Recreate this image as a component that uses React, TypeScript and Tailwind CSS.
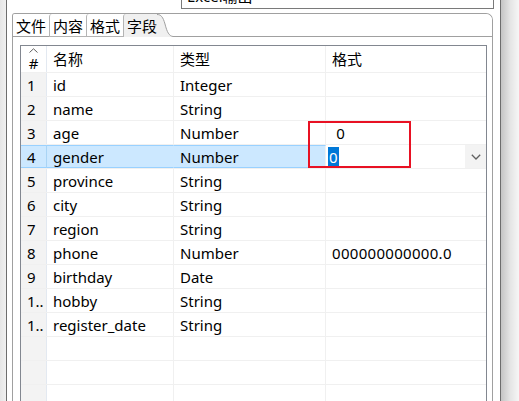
import React from "react";

const rows: [string, string, string, string][] = [
  ["1", "id", "Integer", ""],
  ["2", "name", "String", ""],
  ["3", "age", "Number", " 0"],
  ["4", "gender", "Number", "0"],
  ["5", "province", "String", ""],
  ["6", "city", "String", ""],
  ["7", "region", "String", ""],
  ["8", "phone", "Number", "000000000000.0"],
  ["9", "birthday", "Date", ""],
  ["1..", "hobby", "String", ""],
  ["1..", "register_date", "String", ""],
  ["", "", "", ""],
  ["", "", "", ""],
  ["", "", "", ""],
];

const font = { fontFamily: '"Noto Sans", "Noto Sans CJK SC", sans-serif' };

function Tab({ label, first }: { label: string; first?: boolean }) {
  return (
    <div
      className={`h-full flex items-center pt-[2px] pl-[3px] pr-[3px] bg-white border-b border-[#a0a0a0] ${
        first ? "" : "border-l border-[#b4b4b4] rounded-tl-[3px]"
      }`}
    >
      <span className="text-[15px] leading-none text-black">{label}</span>
    </div>
  );
}

function FieldsTable() {
  return (
    <div className="w-[467px] border border-[#828790] bg-white overflow-hidden flex-1">
      {/* header */}
      <div className="flex h-[27px] border-b border-[#f0f0f0] text-[15px] text-black">
        <div className="w-[26px] flex flex-col items-center border-r border-[#e3e9f1] bg-white">
          <svg width="9" height="5" viewBox="0 0 9 5" className="mt-[2px]">
            <path d="M0.5 4.5 L4.5 0.8 L8.5 4.5" fill="none" stroke="#606060" strokeWidth="1" />
          </svg>
          <span className="leading-none mt-[3px]">#</span>
        </div>
        <div className="w-[127px] pl-[6px] flex items-center border-r border-[#f0f0f0]">名称</div>
        <div className="w-[152px] pl-[6px] flex items-center border-r border-[#f0f0f0]">类型</div>
        <div className="flex-1 pl-[6px] flex items-center">格式</div>
      </div>
      {rows.map((r, i) => {
        const sel = r[0] === "4";
        return (
          <div key={i} className="flex h-[24px] border-b border-[#f0f0f0] text-[15px] text-black">
            <div
              className={`w-[26px] flex items-center pt-[2px] pl-[6px] border-r ${
                sel ? "bg-[#cce8ff] border-[#a9d4f5] border-y border-y-[#99d1ff]" : "bg-[#f3f3f3] border-[#e3e9f1]"
              }`}
            >
              {r[0]}
            </div>
            <div
              className={`w-[127px] pl-[6px] pt-[2px] flex items-center border-r ${
                sel ? "bg-[#cce8ff] border-[#cce8ff] border-y border-y-[#99d1ff]" : "border-[#f0f0f0]"
              }`}
            >
              {r[1]}
            </div>
            <div
              className={`w-[152px] pl-[6px] pt-[2px] flex items-center border-r ${
                sel ? "bg-[#cce8ff] border-[#f0f0f0] border-y border-y-[#99d1ff]" : "border-[#f0f0f0]"
              }`}
            >
              {r[2]}
            </div>
            {sel ? (
              <div className="flex-1 flex items-stretch bg-white">
                <div className="flex-1 flex items-center pt-[1px] pl-[2px]">
                  <span className="bg-[#0078d7] text-white leading-[20px] px-[1px]">0</span>
                </div>
                <div className="w-[21px] bg-[#f3f3f3] flex items-center justify-center">
                  <svg width="10" height="6" viewBox="0 0 10 6">
                    <path d="M0.8 0.8 L5 5 L9.2 0.8" fill="none" stroke="#606060" strokeWidth="1.3" />
                  </svg>
                </div>
              </div>
            ) : (
              <div className="flex-1 pl-[6px] pt-[2px] flex items-center whitespace-pre tracking-[0.3px]">{r[3]}</div>
            )}
          </div>
        );
      })}
    </div>
  );
}

export default function App() {
  return (
    <div className="relative w-[519px] h-[401px] flex overflow-hidden bg-white" style={font}>
      <div className="w-[6px] h-full bg-gradient-to-r from-[#e6e6e6] to-[#f0f0f0]" />
      <div className="w-[495px] h-full flex flex-col border-x border-[#6d6d6d] bg-white">
        {/* cropped text field at top */}
        <div className="h-[13px] flex">
          <div className="ml-[174px] w-[313px] h-[9px] border-x border-b border-[#7a7a7a] overflow-hidden relative">
            <span className="absolute left-[5px] top-[-13px] text-[15px] leading-[18px] text-black">Excel输出</span>
          </div>
        </div>
        {/* tab folder */}
        <div className="ml-[5px] w-[481px] flex-1 flex flex-col border-x border-t border-[#a0a0a0] rounded-tr-[7px] rounded-tl-[3px] overflow-hidden">
          <div className="h-[23px] flex">
            <Tab label="文件" first />
            <Tab label="内容" />
            <Tab label="格式" />
            <div className="h-full flex items-center pt-[2px] pl-[3px] bg-[#f0f0f0] border-l border-[#b4b4b4] rounded-tl-[3px]">
              <span className="text-[15px] leading-none text-black">字段</span>
            </div>
            <svg width="16" height="23" viewBox="0 0 16 23" className="block shrink-0">
              <path d="M0 0 C4 0 6 3 8 10 C10 18 12 22 16 22.5 L16 23 L0 23 Z" fill="#f0f0f0" />
              <path d="M0 0.5 C4 0.5 6 3 8 10 C10 18 12 22 16 22.5" fill="none" stroke="#a0a0a0" strokeWidth="1" />
            </svg>
            <div className="flex-1 border-b border-[#a0a0a0] bg-white" />
          </div>
          <div className="flex-1 flex flex-col pl-[7px] pt-[8px] bg-white">
            <FieldsTable />
          </div>
        </div>
      </div>
      <div className="flex-1 h-full bg-gradient-to-r from-[#c4c4c4] via-[#e4e4e4] to-[#f6f6f6]" />
      {/* red annotation */}
      <div className="absolute left-[308px] top-[121px] w-[103px] h-[47px] border-2 border-[#e81123]" />
    </div>
  );
}
